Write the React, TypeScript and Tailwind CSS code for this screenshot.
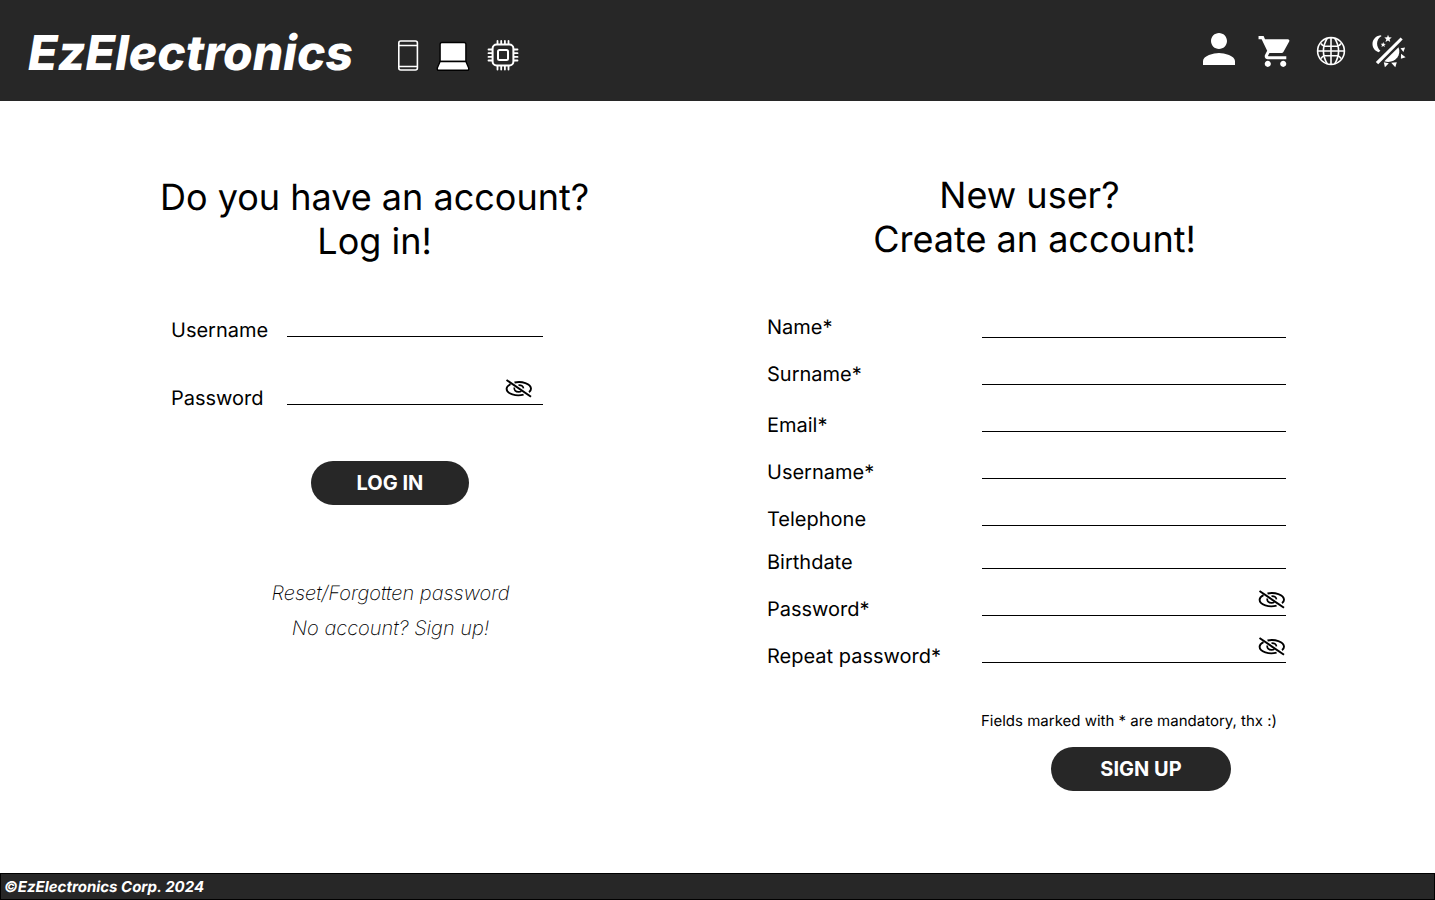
import { useId, useState } from "react";
import { MdPerson, MdShoppingCart } from "react-icons/md";

function PhoneIcon() {
  return (
    <svg width="22" height="32" viewBox="0 0 22 32" fill="none" stroke="white" strokeWidth="1.6" aria-hidden="true">
      <rect x="1.8" y="1" width="18.6" height="29" rx="2" />
      <path d="M1.8 5.500h18.600M1.800 26.500h18.600" />
    </svg>
  );
}

function LaptopIcon() {
  return (
    <svg width="34" height="32" viewBox="0 0 34 32" fill="white" stroke="black" strokeWidth="1.4" strokeLinejoin="round" aria-hidden="true">
      <path d="M5.9 2.500h22.200a1.800 1.800 0 0 1 1.800 1.800V21.500H4.100V4.300A1.800 1.800 0 0 1 5.900 2.500z" />
      <path d="M4.100 21.500h25.800l2.800 6.600q.4 2.200-1.600 2.200H2.900q-2 0-1.600-2.200z" />
    </svg>
  );
}

function ChipIcon() {
  return (
    <svg width="32" height="32" viewBox="0 0 32 32" fill="none" stroke="white" aria-hidden="true">
      <rect x="5.600" y="4.600" width="20.800" height="20.800" rx="4" strokeWidth="2" />
      <rect x="11" y="10" width="10" height="10" rx="1.500" strokeWidth="2" />
      <path
        strokeWidth="1.800"
        strokeLinecap="round"
        d="M10.500 4V.900M14.200 4V.900M17.900 4V.900M21.500 4V.900M10.500 26v3.500M14.200 26v3.500M17.900 26v3.500M21.500 26v3.500M5 9.500H1.500M5 13.200H1.500M5 16.900H1.500M5 20.500H1.500M27 9.500h3.500M27 13.200h3.500M27 16.900h3.500M27 20.500h3.500"
      />
    </svg>
  );
}

function GlobeIcon() {
  return (
    <svg width="30" height="30" viewBox="0 0 30 30" fill="none" stroke="white" strokeWidth="1.600" aria-hidden="true">
      <circle cx="15" cy="15" r="13.400" />
      <path d="M15 1.400v27.200M1.400 15h27.200M5 7.500q1.500 2.700 4 2.700h12q2.500 0 4-2.700M5 22.500q1.500-2.700 4-2.700h12q2.500 0 4 2.700M11.500 1.800q-8.200 13.200 0 26.400M18.500 1.800q8.200 13.200 0 26.400" />
    </svg>
  );
}

function ThemeIcon() {
  return (
    <svg width="34" height="34" viewBox="0 0 34 34" fill="white" aria-hidden="true">
      <path d="M8.500 1.200C-1.200 2.600-2.400 15 6.600 18.200l1.800-1.400C3.600 12.500 4 5 9.600 1.900z" />
      <path d="M16 .8l1 2.500 2.800.3-2.200 1.700.6 2.700-2.200-1.500-2.500 1.400.8-2.600-2-1.800 2.800-.2z" />
      <path d="M11.200 8l.7 1.700 1.900.2-1.500 1.200.5 1.800-1.600-1-1.700 1 .5-1.900-1.300-1.200 1.900-.1z" />
      <path d="M28.600 3.500l2.100 2.100L6.200 30.200l-2.400-2.300z" />
      <path d="M26.500 13.300c3.600 9-5 17-14.200 14z" />
      <path d="M28.500 14.200l4.600-.8-1.700 4.500zM29 19.800l4.600 3.400-4.700 1.600zM19.200 28.800l5.600-.5-1.500 4.900zM11.800 28.300l5 1-3.900 3.900z" />
    </svg>
  );
}

function EyeOffIcon() {
  return (
    <svg width="28" height="20" viewBox="0 0 28 20" fill="none" stroke="black" strokeWidth="1.9" aria-hidden="true">
      <path d="M9.500 3.500C16.500 1.800 26 4.500 26 9.800c0 1.300-.7 2.400-2 3.300M5.500 5.200C3 6.500 1.600 8.100 1.600 9.800c0 5.200 9.600 7.800 17 5.800" />
      <path d="M13.500 6.200c2.700-.1 4.600 1.100 5 3.100M9.400 8.400c-.8 2.600 1.200 4.500 4.300 4.500 1.200 0 2-.3 2.700-.8" strokeWidth="1.700" />
      <path d="M1.500 1L26 17.800" strokeWidth="2" />
    </svg>
  );
}

type FieldProps = {
  label: string;
  type?: string;
  row: string;
  labelPad?: string;
  buttonPad?: string;
};

function Field({ label, type = "text", row, labelPad = "", buttonPad = "" }: FieldProps) {
  const id = useId();
  const [visible, setVisible] = useState(false);
  const secret = type === "password";
  return (
    <div className={`grid items-end ${row}`}>
      <label htmlFor={id} className={`text-xl leading-6 ${labelPad}`}>
        {label}
      </label>
      <div className="mb-[5px] flex h-8 items-center border-b border-black">
        <input
          id={id}
          type={secret && visible ? "text" : type}
          className="h-full w-full min-w-0 flex-1 bg-transparent px-1 text-lg outline-none"
        />
        {secret && (
          <button
            type="button"
            aria-label={visible ? "Hide password" : "Show password"}
            className={buttonPad}
            onClick={() => setVisible(!visible)}
          >
            <EyeOffIcon />
          </button>
        )}
      </div>
    </div>
  );
}

const signUpFields = [
  { label: "Name*", type: "text", height: "h-[47px]", labelPad: "pb-1" },
  { label: "Surname*", type: "text", height: "h-[47px]", labelPad: "pb-1" },
  { label: "Email*", type: "email", height: "h-[47px]" },
  { label: "Username*", type: "text", height: "h-[47px]" },
  { label: "Telephone", type: "tel", height: "h-[47px]" },
  { label: "Birthdate", type: "text", height: "h-[43px]" },
  { label: "Password*", type: "password", height: "h-[47px]" },
  { label: "Repeat password*", type: "password", height: "h-[47px]" },
];

export default function App() {
  return (
    <div className="flex min-h-screen flex-col bg-white font-['Inter',sans-serif] text-black [text-rendering:geometricPrecision]">
      <header className="flex h-[101px] items-center justify-between bg-[#272727] px-7 pt-1 text-white">
        <div className="flex items-center gap-11">
          <a href="#" className="text-5xl font-extrabold italic">
            EzElectronics
          </a>
          <nav className="flex items-center gap-[17px] pt-1.5">
            <a href="#phones" aria-label="Phones"><PhoneIcon /></a>
            <a href="#laptops" aria-label="Laptops"><LaptopIcon /></a>
            <a href="#components" aria-label="Components"><ChipIcon /></a>
          </nav>
        </div>
        <nav className="flex items-center gap-[22px] pr-px pb-1">
          <a href="#account" aria-label="Account" className="-mx-2 pb-1"><MdPerson size={48} /></a>
          <a href="#cart" aria-label="Cart" className="pt-0.5"><MdShoppingCart size={37} /></a>
          <button type="button" aria-label="Language" className="pr-1"><GlobeIcon /></button>
          <button type="button" aria-label="Theme"><ThemeIcon /></button>
        </nav>
      </header>

      <main className="flex flex-1 items-start justify-between pr-[149px] pl-40">
        <section className="pt-[74px]">
          <h1 className="text-center text-4xl leading-11">
            Do you have an account?
            <br />
            Log in!
          </h1>
          <form className="flex flex-col pt-[33px] pl-[11px]" onSubmit={(e) => e.preventDefault()}>
            <Field label="Username" row="h-[46px] grid-cols-[116px_256px]" />
            <Field label="Password" type="password" row="h-[68px] grid-cols-[116px_256px]" buttonPad="pr-2.5" />
            <button type="submit" className="mt-[51px] ml-[140px] h-11 w-[158px] rounded-full bg-[#272727] text-xl font-bold text-white">
              LOG IN
            </button>
          </form>
          <div className="flex flex-col items-center pt-[76px] pl-8 text-xl leading-6 font-extralight italic">
            <a href="#reset">Reset/Forgotten password</a>
            <a href="#signup" className="mt-[11px]">No account? Sign up!</a>
          </div>
        </section>

        <section id="signup" className="w-[519px] pt-[72px]">
          <h1 className="pl-4 text-center text-4xl leading-11">
            New user?&nbsp;
            <br />
            Create an account!
          </h1>
          <form className="flex flex-col pt-[35px]" onSubmit={(e) => e.preventDefault()}>
            {signUpFields.map((f) => (
              <Field
                key={f.label}
                label={f.label}
                type={f.type}
                labelPad={f.labelPad}
                row={`${f.height} grid-cols-[215px_minmax(0,1fr)]`}
              />
            ))}
            <p className="mt-[43px] pl-[214px] text-[15px] leading-5">Fields marked with * are mandatory, thx :)</p>
            <button type="submit" className="mt-4 ml-[284px] h-11 w-[180px] rounded-full bg-[#272727] text-xl font-bold text-white">
              SIGN UP
            </button>
          </form>
        </section>
      </main>

      <footer className="flex h-[27px] items-center border border-black bg-[#272727] pt-px pl-[3px] text-[15px] font-bold text-white italic">
        ©EzElectronics Corp. 2024
      </footer>
    </div>
  );
}
